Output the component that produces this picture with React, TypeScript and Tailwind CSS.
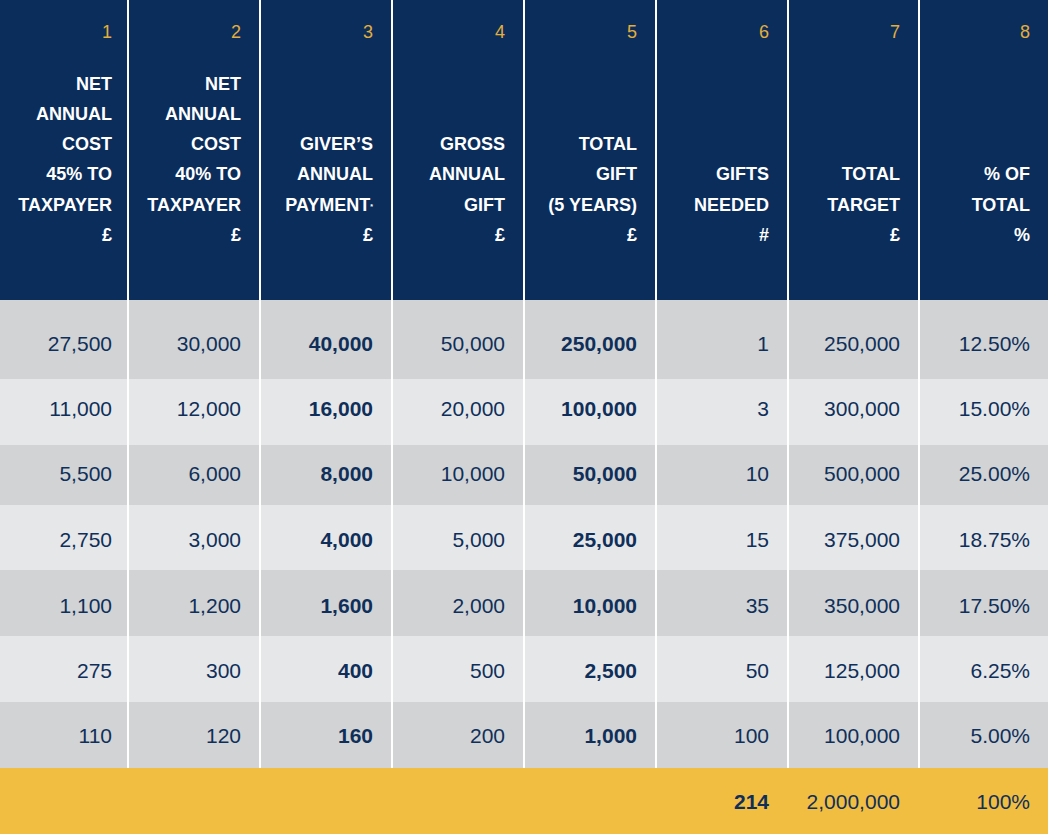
import React from 'react';

const cols = 'grid grid-cols-[127px_130px_130px_130px_130px_130px_129px_128px] gap-x-[2px]';

const headers: string[][] = [
  ['NET', 'ANNUAL', 'COST', '45% TO', 'TAXPAYER', '£'],
  ['NET', 'ANNUAL', 'COST', '40% TO', 'TAXPAYER', '£'],
  ['GIVER’S', 'ANNUAL', 'PAYMENT*', '£'],
  ['GROSS', 'ANNUAL', 'GIFT', '£'],
  ['TOTAL', 'GIFT', '(5 YEARS)', '£'],
  ['GIFTS', 'NEEDED', '#'],
  ['TOTAL', 'TARGET', '£'],
  ['% OF', 'TOTAL', '%'],
];

const rows = [
  { cells: ['27,500', '30,000', '40,000', '50,000', '250,000', '1', '250,000', '12.50%'], cls: 'h-[79px] pt-2 bg-[#d1d3d4]' },
  { cells: ['11,000', '12,000', '16,000', '20,000', '100,000', '3', '300,000', '15.00%'], cls: 'h-[66px] pb-[6px] bg-[#e6e7e8]' },
  { cells: ['5,500', '6,000', '8,000', '10,000', '50,000', '10', '500,000', '25.00%'], cls: 'h-[60px] pb-[2px] bg-[#d1d3d4]' },
  { cells: ['2,750', '3,000', '4,000', '5,000', '25,000', '15', '375,000', '18.75%'], cls: 'h-[65px] pt-1 bg-[#e6e7e8]' },
  { cells: ['1,100', '1,200', '1,600', '2,000', '10,000', '35', '350,000', '17.50%'], cls: 'h-[66px] pt-[6px] bg-[#d1d3d4]' },
  { cells: ['275', '300', '400', '500', '2,500', '50', '125,000', '6.25%'], cls: 'h-[66px] pt-1 bg-[#e6e7e8]' },
  { cells: ['110', '120', '160', '200', '1,000', '100', '100,000', '5.00%'], cls: 'h-[66px] pt-[2px] bg-[#d1d3d4]' },
];

function HeaderLabel({ text }: { text: string }) {
  if (text.endsWith('*')) {
    return (
      <div>
        {text.slice(0, -1)}
        <sup className="text-[7px] relative -top-[2px]">*</sup>
      </div>
    );
  }
  return <div>{text}</div>;
}

export default function App() {
  return (
    <div
      className="w-[1048px] h-[834px] bg-white text-[#0f2f5a] overflow-hidden"
      style={{ fontFamily: '"Liberation Sans", Arial, Helvetica, sans-serif' }}
    >
      {/* header */}
      <div className={`${cols} bg-white`}>
        {headers.map((lines, i) => (
          <div
            key={i}
            className={`h-[300px] bg-[#0b2d5b] flex flex-col items-end text-right pt-[17px] pb-[50px] ${i === 0 ? 'pr-[15px]' : 'pr-[18px]'}`}
          >
            <div className="text-[18px] leading-[30px] text-[#e3ae3c]">{i + 1}</div>
            <div className="mt-auto text-[18px] leading-[30.2px] font-bold text-white">
              {lines.map((l, j) => (
                <HeaderLabel key={j} text={l} />
              ))}
            </div>
          </div>
        ))}
      </div>

      {/* body */}
      {rows.map((row, r) => (
        <div key={r} className={`${cols} bg-white`}>
          {row.cells.map((c, i) => (
            <div
              key={i}
              className={`${row.cls} flex items-center justify-end text-[21px] ${i === 0 ? 'pr-[15px]' : 'pr-[18px]'} ${i === 2 || i === 4 ? 'font-bold' : ''}`}
            >
              {c}
            </div>
          ))}
        </div>
      ))}

      {/* totals */}
      <div className={`${cols} bg-[#f2be42] h-[66px] pt-[2px] text-[21px]`}>
        <div />
        <div />
        <div />
        <div />
        <div />
        <div className="flex items-center justify-end pr-[18px] font-bold">214</div>
        <div className="flex items-center justify-end pr-[18px]">2,000,000</div>
        <div className="flex items-center justify-end pr-[18px]">100%</div>
      </div>
    </div>
  );
}
